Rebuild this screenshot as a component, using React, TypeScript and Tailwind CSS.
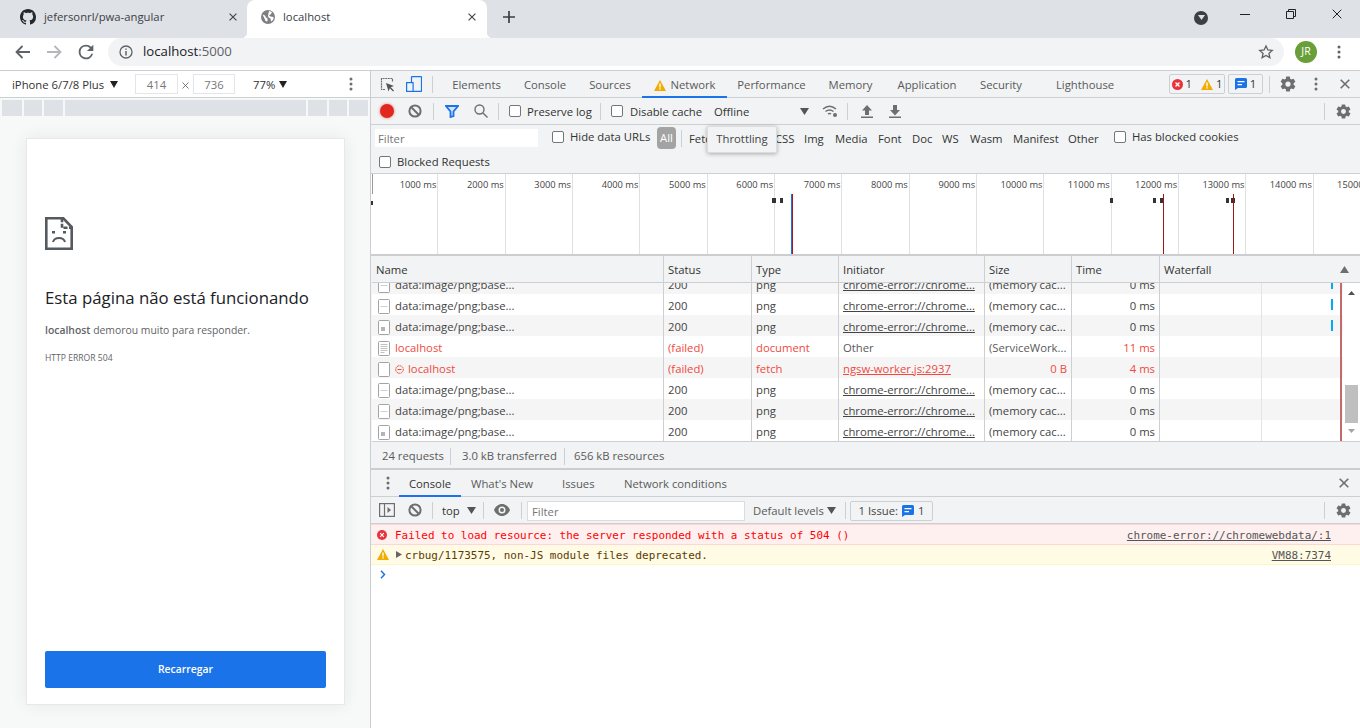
import React from "react";

const Gear = ({ className = "" }: { className?: string }) => (
  <svg viewBox="0 0 24 24" className={className} fill="#6e6e6e">
    <path d="M19.43 12.98c.04-.32.07-.64.07-.98s-.03-.66-.07-.98l2.11-1.65a.5.5 0 0 0 .12-.64l-2-3.46a.5.5 0 0 0-.61-.22l-2.49 1a7.3 7.3 0 0 0-1.69-.98l-.38-2.65A.49.49 0 0 0 14 2h-4a.49.49 0 0 0-.49.42l-.38 2.65c-.61.25-1.17.59-1.69.98l-2.49-1a.49.49 0 0 0-.61.22l-2 3.46a.49.49 0 0 0 .12.64l2.11 1.65c-.04.32-.07.65-.07.98s.03.66.07.98l-2.11 1.65a.5.5 0 0 0-.12.64l2 3.46c.12.22.39.3.61.22l2.49-1c.52.4 1.08.73 1.69.98l.38 2.65c.03.24.24.42.49.42h4c.25 0 .46-.18.49-.42l.38-2.65c.61-.25 1.17-.59 1.69-.98l2.49 1c.23.09.49 0 .61-.22l2-3.46a.5.5 0 0 0-.12-.64l-2.11-1.65zM12 15.5a3.5 3.5 0 1 1 0-7 3.5 3.5 0 0 1 0 7z" />
  </svg>
);

const Dots = ({ color = "#6e6e6e" }: { color?: string }) => (
  <svg width="4" height="14" viewBox="0 0 4 14" fill={color}>
    <circle cx="2" cy="2" r="1.5" />
    <circle cx="2" cy="7" r="1.5" />
    <circle cx="2" cy="12" r="1.5" />
  </svg>
);

const Clear = () => (
  <svg width="14" height="14" viewBox="0 0 14 14" fill="none" stroke="#6e6e6e" strokeWidth="2">
    <circle cx="7" cy="7" r="5.6" />
    <path d="M3 3l8 8" />
  </svg>
);

const Cross = ({ size = 10, color = "#6e6e6e", sw = 1.6 }: { size?: number; color?: string; sw?: number }) => (
  <svg width={size} height={size} viewBox="0 0 10 10" stroke={color} strokeWidth={sw} fill="none">
    <path d="M.7.7l8.6 8.6M9.3.7L.7 9.3" />
  </svg>
);

const Down = () => (
  <svg width="9" height="7" viewBox="0 0 9 7" fill="#555">
    <path d="M0 0h9L4.5 7z" />
  </svg>
);

const Sep = ({ className = "" }: { className?: string }) => <span className={`w-px h-[17px] bg-[#cdcfd2] shrink-0 ${className}`} />;

const Check = ({ className = "" }: { className?: string }) => (
  <span className={`w-[12px] h-[12px] rounded-[2px] border border-[#767676] bg-white shrink-0 ${className}`} />
);

const WarnIcon = () => (
  <svg width="12" height="11" viewBox="0 0 12 11">
    <path d="M6 0l6 11H0z" fill="#f2ab00" />
    <path d="M5.3 3.5h1.4v4H5.3zM5.3 8.3h1.4v1.3H5.3z" fill="#fff" />
  </svg>
);

const ErrIcon = () => (
  <svg width="11" height="11" viewBox="0 0 11 11">
    <circle cx="5.5" cy="5.5" r="5.5" fill="#e8323c" />
    <path d="M3.5 3.5l4 4M7.5 3.5l-4 4" stroke="#fff" strokeWidth="1.3" />
  </svg>
);

const MsgIcon = () => (
  <svg width="12" height="12" viewBox="0 0 12 12">
    <path d="M1.5 0h9A1.5 1.5 0 0 1 12 1.5v7A1.5 1.5 0 0 1 10.5 10H3l-3 2V1.5A1.5 1.5 0 0 1 1.5 0z" fill="#1a73e8" />
    <path d="M2.5 3h7v1.3h-7zM2.5 6h4.500v1.300h-4.500z" fill="#fff" />
  </svg>
);

const DocIcon = ({ kind }: { kind: "dash" | "img" | "lines" | "blank" }) => (
  <svg width="13" height="15" viewBox="0 0 13 15" className="shrink-0">
    <rect x=".5" y=".5" width="11" height="14" rx="1" fill="#fff" stroke="#a3a3a3" />
    {kind === "dash" && <path d="M2.5 7.500h7" stroke="#d0d0d0" />}
    {kind === "img" && <rect x="3" y="7" width="4" height="4" fill="#b5b5b5" />}
    {kind === "lines" && <path d="M2.5 3.500h7M2.500 5.500h7M2.500 7.500h7M2.500 9.500h7M2.500 11.500h4" stroke="#c0c0c0" />}
  </svg>
);

type Row = {
  icon: "dash" | "img" | "lines" | "blank";
  name: string;
  status: string;
  type: string;
  init: string;
  size: string;
  time: string;
  red?: boolean;
  link?: boolean;
  alt?: boolean;
  fail?: boolean;
  bar?: string;
  grayMeta?: boolean;
};

const png = "data:image/png;base...";
const cr = "chrome-error://chrome...";
const mem = "(memory cac...";

const rows: Row[] = [
  { icon: "dash", name: png, status: "200", type: "png", init: cr, size: mem, time: "0 ms", link: true, alt: true, bar: "h-[6px]" },
  { icon: "dash", name: png, status: "200", type: "png", init: cr, size: mem, time: "0 ms", link: true, bar: "h-[11px]" },
  { icon: "img", name: png, status: "200", type: "png", init: cr, size: mem, time: "0 ms", link: true, alt: true, bar: "h-[11px]" },
  { icon: "lines", name: "localhost", status: "(failed)", type: "document", init: "Other", size: "(ServiceWork...", time: "11 ms", red: true, grayMeta: true },
  { icon: "blank", name: "localhost", status: "(failed)", type: "fetch", init: "ngsw-worker.js:2937", size: "0 B", time: "4 ms", red: true, link: true, alt: true, fail: true },
  { icon: "dash", name: png, status: "200", type: "png", init: cr, size: mem, time: "0 ms", link: true },
  { icon: "dash", name: png, status: "200", type: "png", init: cr, size: mem, time: "0 ms", link: true, alt: true },
  { icon: "img", name: png, status: "200", type: "png", init: cr, size: mem, time: "0 ms", link: true },
];

const cols = "grid grid-cols-[292px_88px_87px_146px_87px_88px_1fr]";
const ticks = [1000, 2000, 3000, 4000, 5000, 6000, 7000, 8000, 9000, 10000, 11000, 12000, 13000, 14000, 15000];
const marks: [number, number][] = [
  [401, 4], [409, 3], [739, 3], [782, 3], [789, 4], [855, 3], [860, 4],
];

const Head = ({ children, last }: { children: React.ReactNode; last?: boolean }) => (
  <div className={`pl-[4px] pt-[2px] flex items-center justify-between ${last ? "" : "border-r border-[#cdcfd2]"}`}>{children}</div>
);

export default function App() {
  return (
    <div className="w-[1360px] h-[728px] overflow-hidden flex flex-col bg-white text-[#333] text-[11.3px] font-['Open_Sans',sans-serif]">
      {/* tab strip */}
      <div className="h-[38px] bg-[#dee1e6] flex items-center shrink-0 text-[#3c4043]">
        <div className="w-[247px] h-full flex items-center pl-[20px] pr-[10px] pb-[4px]">
          <svg width="16" height="16" viewBox="0 0 16 16" fill="#24292e">
            <path d="M8 0C3.58 0 0 3.58 0 8c0 3.54 2.29 6.53 5.47 7.59.4.07.55-.17.55-.38 0-.19-.01-.82-.01-1.49-2.01.37-2.53-.49-2.69-.94-.09-.23-.48-.94-.82-1.13-.28-.15-.68-.52-.01-.53.63-.01 1.08.58 1.23.82.72 1.21 1.87.87 2.33.66.07-.52.28-.87.51-1.07-1.78-.2-3.64-.89-3.64-3.95 0-.87.31-1.59.82-2.15-.08-.2-.36-1.02.08-2.12 0 0 .67-.21 2.2.82.64-.18 1.32-.27 2-.27.68 0 1.36.09 2 .27 1.53-1.04 2.2-.82 2.2-.82.44 1.1.16 1.92.08 2.12.51.56.82 1.27.82 2.15 0 3.07-1.87 3.75-3.65 3.95.29.25.54.73.54 1.48 0 1.07-.01 1.93-.01 2.2 0 .21.15.46.55.38A8.013 8.013 0 0 0 16 8c0-4.42-3.58-8-8-8z" />
          </svg>
          <span className="ml-[8px] flex-1 whitespace-nowrap">jefersonrl/pwa-angular</span>
          <Cross size={8} color="#45474a" sw={1.5} />
        </div>
        <div className="w-[240px] h-full bg-white rounded-t-[8px] flex items-center pl-[13px] pr-[11px] pb-[4px] relative">
          <span className="absolute left-[-6px] bottom-0 w-[6px] h-[6px] bg-[radial-gradient(circle_at_0_0,#dee1e6_6px,#fff_6.5px)]" />
          <span className="absolute right-[-6px] bottom-0 w-[6px] h-[6px] bg-[radial-gradient(circle_at_100%_0,#dee1e6_6px,#fff_6.5px)]" />
          <svg width="16" height="16" viewBox="0 0 16 16">
            <circle cx="8" cy="8" r="7" fill="#7d7f82" />
            <path d="M2.5 5.5L5 6.5l1 2 1.5 1v3l-2-.5-1-2.5zM9 2l3 1-1 2-2 1.5 1.5 1 3 .5V10l-1.5 2-1 .5-.5-3-2-1-.5-2z" fill="#fff" />
          </svg>
          <span className="ml-[7px] flex-1 whitespace-nowrap">localhost</span>
          <Cross size={8} color="#45474a" sw={1.5} />
        </div>
        <svg width="12" height="12" viewBox="0 0 12 12" className="ml-[16px] mb-[4px]" stroke="#3c4043" strokeWidth="1.7">
          <path d="M6 0v12M0 6h12" />
        </svg>
        <div className="flex-1" />
        <span className="w-[14px] h-[14px] rounded-full bg-[#3c4043] flex items-center justify-center mr-[32px] mb-[3px]">
          <svg width="7" height="5" viewBox="0 0 7 5" fill="#dee1e6"><path d="M0 0h7L3.5 5z" /></svg>
        </span>
        <span className="w-[10px] h-px bg-[#222] mr-[36px] mb-[10px]" />
        <svg width="10" height="10" viewBox="0 0 10 10" fill="none" stroke="#222" className="mr-[36px] mb-[10px]">
          <path d="M.5 2.5h7v7h-7zM2.5 2.5v-2h7v7h-2" />
        </svg>
        <span className="mr-[18px] mb-[10px] flex"><Cross size={10} color="#222" sw={1} /></span>
      </div>

      {/* address bar */}
      <div className="h-[33px] bg-white flex items-start shrink-0 border-b border-[#cbcdd1]">
        <div className="w-[108px] h-[28px] flex items-center pl-[15px]">
          <svg width="15" height="14" viewBox="0 0 15 14" stroke="#5f6368" strokeWidth="1.8" fill="none"><path d="M15 7H1.5M7.5 1l-6 6 6 6" /></svg>
          <svg width="15" height="14" viewBox="0 0 15 14" stroke="#b5b7ba" strokeWidth="1.8" fill="none" className="ml-[17px]"><path d="M0 7h13.5M7.5 1l6 6-6 6" /></svg>
          <svg width="22" height="22" viewBox="0 0 24 24" fill="#5f6368" className="ml-[13px]"><path d="M17.65 6.35A7.96 7.96 0 0 0 12 4a8 8 0 1 0 7.73 10h-2.08A6 6 0 1 1 12 6c1.66 0 3.14.69 4.22 1.78L13 11h7V4l-2.35 2.35z" /></svg>
        </div>
        <div className="w-[1176px] h-[28px] rounded-full bg-[#f1f3f4] flex items-center pl-[11px] pr-[10px]">
          <svg width="14" height="14" viewBox="0 0 14 14" fill="none" stroke="#5f6368" strokeWidth="1.3">
            <circle cx="7" cy="7" r="6" />
            <path d="M7 6v4.5M7 3.5v1.3" strokeWidth="1.5" />
          </svg>
          <span className="ml-[10px] text-[13.2px] text-[#202124]">localhost<span className="text-[#5f6368]">:5000</span></span>
          <div className="flex-1" />
          <svg width="16" height="16" viewBox="0 0 24 24" fill="none" stroke="#5f6368" strokeWidth="2"><path d="M12 3l2.800 6 6.500.7-4.900 4.400 1.400 6.400L12 17.200l-5.800 3.300 1.400-6.400L2.700 9.700 9.200 9z" /></svg>
        </div>
        <div className="flex-1 h-[28px] flex items-center">
          <span className="ml-[11px] w-[22px] h-[22px] rounded-full bg-[#689f38] text-white text-[10.5px] flex items-center justify-center">JR</span>
          <span className="ml-[20px] flex"><Dots color="#5f6368" /></span>
        </div>
      </div>

      {/* main */}
      <div className="flex-1 flex min-h-0">
        {/* device pane */}
        <div className="w-[370px] shrink-0 flex flex-col bg-[#f7f9f9] border-r border-[#cbcdd1] box-content">
          <div className="h-[26px] bg-white border-b border-[#cdcfd2] box-content flex items-center pl-[12px] text-[#333] shrink-0">
            <span className="w-[93px] whitespace-nowrap pt-[2px]">iPhone 6/7/8 Plus</span>
            <span className="ml-[5px]"><svg width="8" height="7" viewBox="0 0 8 7" fill="#222"><path d="M0 0h8L4 7z" /></svg></span>
            <span className="ml-[17px] w-[43px] h-[20px] border border-[#e4e5e6] flex items-center justify-center text-[#777] pt-[2px]">414</span>
            <span className="ml-px w-[12px] flex justify-center mt-[3px]"><Cross size={7} color="#555" sw={1.1} /></span>
            <span className="ml-[2px] w-[42px] h-[20px] border border-[#e4e5e6] flex items-center justify-center text-[#777] pt-[2px]">736</span>
            <span className="ml-[18px] w-[22px] pt-[2px]">77%</span>
            <span className="ml-[4px]"><svg width="8" height="7" viewBox="0 0 8 7" fill="#222"><path d="M0 0h8L4 7z" /></svg></span>
            <span className="ml-[62px] flex"><Dots /></span>
          </div>
          <div className="h-[16px] mt-[2px] mx-[2px] flex gap-[2px] shrink-0">
            <span className="w-[20px] bg-[#dee1e6]" />
            <span className="w-[18px] bg-[#dee1e6]" />
            <span className="w-[19px] bg-[#dee1e6]" />
            <span className="flex-1 bg-[#dee1e6]" />
            <span className="w-[19px] bg-[#dee1e6]" />
            <span className="w-[18px] bg-[#dee1e6]" />
            <span className="w-[19px] bg-[#dee1e6]" />
          </div>
          <div className="ml-[26px] mt-[22px] w-[319px] h-[567px] bg-white border-x border-y border-[#e7e8e8] shadow-[0_0_16px_rgba(0,0,0,0.07)] flex flex-col px-[18px] shrink-0">
            <svg width="28" height="33" viewBox="0 0 28 33" className="mt-[78px]" fill="none" stroke="#555a5e" strokeWidth="2.6">
              <path d="M1.3 1.3h17l8.400 8.700v21.700H1.300z" />
              <path d="M17 1.3v9.500h9.500" strokeDasharray="4 1.5" />
              <path d="M8 25c.8-2.800 3-4 6-4s5.200 1.200 6 4" strokeWidth="2" />
              <path d="M7 14h3v2.500H7zM18 14h3v2.500h-3z" fill="#555a5e" stroke="none" />
            </svg>
            <h1 className="mt-[37px] text-[16.8px] leading-[22px] font-medium text-[#202124] whitespace-nowrap">Esta página não está funcionando</h1>
            <p className="mt-[14px] text-[10.4px] leading-[14px] text-[#5f6368] whitespace-nowrap"><b className="font-semibold">localhost</b> demorou muito para responder.</p>
            <p className="mt-[15px] text-[8.6px] leading-[12px] text-[#5f6368]">HTTP ERROR 504</p>
            <div className="flex-1" />
            <button className="mb-[16px] h-[37px] w-[281px] rounded-[2px] bg-[#1a73e8] text-white text-[10.4px] font-semibold flex items-center justify-center">Recarregar</button>
          </div>
        </div>

        {/* devtools */}
        <div className="flex-1 min-w-0 flex flex-col bg-[#f1f3f4] relative">
          {/* tabs */}
          <div className="h-[26px] box-content border-b border-[#cdcfd2] flex items-center shrink-0 text-[#5a5a5a]">
            <svg width="15" height="15" viewBox="0 0 15 15" className="ml-[9px]" fill="none">
              <path d="M5 12.5H1.5v-11h11V5" stroke="#6e6e6e" strokeWidth="1.2" strokeDasharray="2 .6" />
              <path d="M6 6l8 3-3.300 1.300L14 13.500l-1 1-3.200-3.200L8.500 14.500z" fill="#555" />
            </svg>
            <svg width="16" height="16" viewBox="0 0 16 16" className="ml-[11px]" fill="none" stroke="#1a73e8" strokeWidth="1.2">
              <rect x="5.5" y=".6" width="10" height="14.8" rx=".5" />
              <rect x=".6" y="6.6" width="6.5" height="8.8" fill="#f1f3f4" />
            </svg>
            <Sep className="ml-[10px]" />
            {[
              ["Elements", "w-[71px] ml-[8px]"],
              ["Console", "w-[66px]"],
              ["Sources", "w-[64px]"],
            ].map(([t, w]) => (
              <span key={t} className={`${w} pt-[2px] text-center whitespace-nowrap`}>{t}</span>
            ))}
            <span className="w-[85px] self-stretch -mb-px border-b-2 border-[#1a73e8] flex items-center justify-center gap-[5px] whitespace-nowrap pt-[3px]"><WarnIcon />Network</span>
            {[
              ["Performance", "w-[89px]"],
              ["Memory", "w-[69px]"],
              ["Application", "w-[84px]"],
              ["Security", "w-[64px]"],
              ["Lighthouse", "w-[82px] ml-[11px]"],
            ].map(([t, w]) => (
              <span key={t} className={`${w} pt-[2px] text-center whitespace-nowrap`}>{t}</span>
            ))}
            <div className="flex-1" />
            <span className="w-[56px] h-[20px] border border-[#cdcfd2] rounded-[2px] flex items-center justify-center gap-[3px] text-[#333]"><ErrIcon />1<span className="w-[3px]" /><WarnIcon />1</span>
            <span className="ml-[3px] w-[35px] h-[20px] border border-[#cdcfd2] rounded-[2px] flex items-center justify-center gap-[3px] text-[#333]"><MsgIcon />1</span>
            <Sep className="ml-[6px]" />
            <Gear className="ml-[9px] w-[18px] h-[18px]" />
            <span className="ml-[17px] flex"><Dots /></span>
            <span className="ml-[22px] mr-[10px] flex"><Cross size={10} /></span>
          </div>

          {/* network toolbar */}
          <div className="h-[26px] box-content border-b border-[#cdcfd2] flex items-center shrink-0">
            <span className="ml-[9px] w-[14px] h-[14px] rounded-full bg-[#e0281f] shadow-[0_0_3px_rgba(224,40,31,0.6)]" />
            <span className="ml-[14px] flex"><Clear /></span>
            <Sep className="ml-[11px]" />
            <svg width="14" height="13" viewBox="0 0 14 13" className="ml-[11px]" fill="#d2e3fc" stroke="#1a73e8" strokeWidth="1.8"><path d="M1 1h12L8.500 6.500V11l-3 1V6.500z" /></svg>
            <svg width="14" height="14" viewBox="0 0 14 14" className="ml-[15px]" fill="none" stroke="#6e6e6e" strokeWidth="1.4"><circle cx="5.5" cy="5.5" r="4.5" /><path d="M9 9l4.500 4.500" /></svg>
            <Sep className="ml-[10px]" />
            <Check className="ml-[10px]" />
            <span className="ml-[6px] w-[64px] whitespace-nowrap pt-[2px]">Preserve log</span>
            <Sep className="ml-[9px]" />
            <Check className="ml-[10px]" />
            <span className="ml-[7px] w-[73px] whitespace-nowrap pt-[2px]">Disable cache</span>
            <span className="ml-[11px] w-[86px] pt-[2px]">Offline</span>
            <Down />
            <svg width="16" height="13" viewBox="0 0 16 13" className="ml-[13px]" fill="none" stroke="#6e6e6e" strokeWidth="1.5">
              <path d="M1 4c4-3.500 9-3.500 13 0M3.500 6.500c2.500-2 5.500-2 8 0M6 9c1-.8 2-.8 3 0" />
              <circle cx="13" cy="10" r="2" fill="#6e6e6e" stroke="none" />
            </svg>
            <Sep className="ml-[9px]" />
            <svg width="12" height="13" viewBox="0 0 12 13" className="ml-[13px]" fill="#6e6e6e"><path d="M6 0l5 5.500H8V10H4V5.500H1zM0 11.500h12V13H0z" /></svg>
            <svg width="12" height="13" viewBox="0 0 12 13" className="ml-[16px]" fill="#6e6e6e"><path d="M4 0h4v5h3l-5 5.500L1 5h3zM0 11.500h12V13H0z" /></svg>
            <div className="flex-1" />
            <Sep />
            <Gear className="ml-[10px] mr-[8px] w-[17px] h-[17px]" />
          </div>

          {/* filter */}
          <div className="h-[48px] box-content border-b border-[#cdcfd2] flex flex-col shrink-0">
            <div className="h-[26px] flex items-center">
              <span className="ml-[4px] w-[163px] h-[18px] bg-white flex items-center pl-[3px] pt-[2px] text-[#757575]">Filter</span>
              <Check className="ml-[14px] -mt-[2px]" />
              <span className="ml-[6px] w-[81px] whitespace-nowrap -mt-[2px]">Hide data URLs</span>
              <span className="ml-[6px] w-[19px] h-[22px] rounded-[4px] bg-[#a3a3a3] text-white flex items-center justify-center">All</span>
              <Sep className="ml-[5px]" />
              <span className="ml-[7px] flex items-center gap-[10px] whitespace-nowrap pt-[2px]">
                <span className="w-[77px]">Fetch/XHR JS</span>
                <span className="w-[19px] ml-[-1px]">CSS</span>
                <span className="w-[21px]">Img</span>
                <span className="w-[33px]">Media</span>
                <span className="w-[24px]">Font</span>
                <span className="w-[20px]">Doc</span>
                <span className="w-[18px]">WS</span>
                <span className="w-[32px]">Wasm</span>
                <span className="w-[45px] ml-px">Manifest</span>
                <span className="w-[31px]">Other</span>
              </span>
              <Check className="ml-[15px] -mt-[2px]" />
              <span className="ml-[6px] whitespace-nowrap -mt-[2px]">Has blocked cookies</span>
            </div>
            <div className="flex-1 flex items-center pl-[8px]">
              <Check />
              <span className="ml-[6px] whitespace-nowrap">Blocked Requests</span>
            </div>
          </div>

          {/* tooltip */}
          <div className="absolute left-[336px] top-[55px] w-[70px] h-[27px] bg-[#f1f3f4] rounded-[2px] border border-[#dcdcdc] shadow-[0_1px_4px_rgba(0,0,0,0.3)] flex items-center justify-center whitespace-nowrap text-[#444]">Throttling</div>

          {/* overview */}
          <div className="h-[80px] bg-white flex relative shrink-0 overflow-hidden">
            {ticks.map((t) => (
              <div key={t} className="w-[67.35px] shrink-0 h-full border-r border-[#e0e0e0] box-border text-right pr-px text-[9.3px] leading-[22px] whitespace-nowrap text-[#444]">{t} ms</div>
            ))}
            {marks.map(([x, w], i) => (
              <span key={i} className="absolute top-[24px] h-[5px] bg-[#333]" style={{ left: x, width: w }} />
            ))}
            <span className="absolute left-px top-0 h-[20px] w-px bg-[#9a9a9a]" />
            <span className="absolute left-0 top-[27px] h-[4px] w-[2px] bg-[#333]" />
            <span className="absolute left-[420px] top-[20px] bottom-0 w-[1px] bg-[#1a73e8]" />
            <span className="absolute left-[421px] top-[20px] bottom-0 w-[1px] bg-[#b3141a]" />
            <span className="absolute left-[792px] top-[20px] bottom-0 w-[1px] bg-[#a31515]" />
            <span className="absolute left-[862px] top-[20px] bottom-0 w-[1px] bg-[#a31515]" />
          </div>
          <div className="h-[2px] bg-[#cbcdd1] shrink-0" />

          {/* table */}
          <div className="flex-1 min-h-0 flex flex-col relative">
            <div className={`${cols} h-[26px] box-content border-b border-[#cdcfd2] ml-px shrink-0`}>
              <Head>Name</Head>
              <Head>Status</Head>
              <Head>Type</Head>
              <Head>Initiator</Head>
              <Head>Size</Head>
              <Head>Time</Head>
              <Head last>
                <span>Waterfall</span>
                <svg width="9" height="7" viewBox="0 0 9 7" fill="#6e6e6e" className="mr-[11px] -mt-[2px]"><path d="M0 7h9L4.500 0z" /></svg>
              </Head>
            </div>
            <div className="h-[158px] box-content border-b border-[#cdcfd2] overflow-hidden bg-white ml-px relative shrink-0">
              <div className="-mt-[10px]">
                {rows.map((r, i) => (
                  <div key={i} className={`${cols} h-[21px] ${r.alt ? "bg-[#f5f5f5]" : "bg-white"} ${r.red ? "text-[#f0493e]" : "text-[#444]"}`}>
                    <div className="border-r border-[#cdcfd2] flex items-center pl-[6px] pt-[3px] whitespace-nowrap">
                      <DocIcon kind={r.icon} />
                      {r.fail && (
                        <svg width="9" height="9" viewBox="0 0 9 9" className="ml-[4px]" fill="none" stroke="#f0493e"><circle cx="4.5" cy="4.5" r="3.8" strokeDasharray="2 .5" /><path d="M2.5 4.5h4" /></svg>
                      )}
                      <span className="ml-[4px]">{r.name}</span>
                    </div>
                    <div className="border-r border-[#cdcfd2] flex items-center pl-[4px] pt-[3px]">{r.status}</div>
                    <div className="border-r border-[#cdcfd2] flex items-center pl-[4px] pt-[3px]">{r.type}</div>
                    <div className={`border-r border-[#cdcfd2] flex items-center pl-[4px] pt-[3px] whitespace-nowrap overflow-hidden ${r.link ? "underline" : ""} ${r.grayMeta ? "text-[#5a5a5a]" : ""}`}>{r.init}</div>
                    <div className={`border-r border-[#cdcfd2] flex items-center px-[4px] pt-[3px] whitespace-nowrap overflow-hidden ${r.size === "0 B" ? "justify-end" : ""} ${r.grayMeta ? "text-[#5a5a5a]" : ""}`}>{r.size}</div>
                    <div className="border-r border-[#cdcfd2] flex items-center justify-end pr-[4px] pt-[3px]">{r.time}</div>
                    <div className="relative">
                      <span className="absolute left-[101px] top-0 bottom-0 w-px bg-[#e4e4e4]" />
                      {r.bar && <span className={`absolute left-[171px] bottom-[5px] w-[2px] bg-[#03a9f4] ${r.bar}`} />}
                    </div>
                  </div>
                ))}
              </div>
              <span className="absolute left-[968px] top-0 bottom-0 w-[2px] bg-[#c46a6a]" />
              <div className="absolute right-0 top-0 bottom-0 w-[17px] bg-white flex flex-col items-center">
                <svg width="7" height="4" viewBox="0 0 7 4" fill="#505050" className="mt-[8px]"><path d="M0 4h7L3.5 0z" /></svg>
                <div className="flex-1" />
                <span className="w-[13px] h-[38px] bg-[#bfbfbf]" />
                <svg width="7" height="4" viewBox="0 0 7 4" fill="#a3a3a3" className="mt-[6px] mb-[8px]"><path d="M0 0h7L3.5 4z" /></svg>
              </div>
            </div>
            <div className="h-[26px] flex items-center pl-[11px] pt-[2px] text-[#5a5a5a] shrink-0 whitespace-nowrap">
              <span className="w-[62px]">24 requests</span>
              <Sep className="ml-[6px]" />
              <span className="ml-[11px] w-[93px]">3.0 kB transferred</span>
              <Sep className="ml-[9px]" />
              <span className="ml-[9px]">656 kB resources</span>
            </div>
            <div className="h-[2px] bg-[#cbcdd1] shrink-0" />

            {/* drawer tabs */}
            <div className="h-[26px] box-content border-b border-[#cdcfd2] flex items-center shrink-0 text-[#5a5a5a]">
              <span className="ml-[15px] flex"><Dots /></span>
              <span className="ml-[9px] w-[62px] self-stretch -mb-px border-b-2 border-[#1a73e8] flex items-center justify-center text-[#333] pt-[3px]">Console</span>
              <span className="ml-[10px] w-[64px] whitespace-nowrap pt-[2px]">What's New</span>
              <span className="ml-[27px] w-[33px] pt-[2px]">Issues</span>
              <span className="ml-[29px] whitespace-nowrap pt-[2px]">Network conditions</span>
              <div className="flex-1" />
              <span className="mr-[11px] flex"><Cross size={10} /></span>
            </div>

            {/* console toolbar */}
            <div className="h-[26px] box-content border-b border-[#cdcfd2] flex items-center shrink-0">
              <svg width="16" height="14" viewBox="0 0 16 14" className="ml-[8px]" fill="none" stroke="#6e6e6e" strokeWidth="1.2">
                <rect x=".6" y=".6" width="14.8" height="12.8" />
                <path d="M5.5 .6v12.800" />
                <path d="M8.5 4l3.500 3-3.500 3z" fill="#6e6e6e" stroke="none" />
              </svg>
              <span className="ml-[13px] flex"><Clear /></span>
              <Sep className="ml-[10px]" />
              <span className="ml-[9px] w-[20px] pt-[2px]">top</span>
              <span className="ml-[5px] flex"><Down /></span>
              <Sep className="ml-[7px]" />
              <svg width="16" height="12" viewBox="0 0 16 12" className="ml-[10px]" fill="#6e6e6e"><path d="M8 0C4.500 0 1.500 2.500 0 6c1.500 3.500 4.500 6 8 6s6.500-2.500 8-6c-1.500-3.500-4.500-6-8-6zm0 9.500a3.500 3.500 0 1 1 0-7 3.500 3.500 0 0 1 0 7z" /><circle cx="8" cy="6" r="2" /></svg>
              <Sep className="ml-[11px]" />
              <span className="ml-[5px] mt-[2px] w-[218px] h-[20px] bg-white border border-[#dcdcdc] flex items-center pl-[4px] pt-[2px] text-[#757575]">Filter</span>
              <span className="ml-[8px] w-[71px] text-[#5a5a5a] whitespace-nowrap pt-[2px]">Default levels</span>
              <span className="ml-[3px] flex"><Down /></span>
              <Sep className="ml-[9px]" />
              <span className="ml-[4px] mt-[2px] w-[83px] h-[20px] border border-[#cdcfd2] rounded-[2px] flex items-center justify-center gap-[4px] whitespace-nowrap text-[#444]">1 Issue: <MsgIcon />1</span>
              <div className="flex-1" />
              <Sep />
              <Gear className="ml-[10px] mr-[8px] w-[17px] h-[17px]" />
            </div>

            {/* messages */}
            <div className="flex-1 bg-white flex flex-col font-['DejaVu_Sans_Mono',monospace] text-[10.95px]">
              <div className="h-[21px] bg-[#fff0f0] border-b border-[#ffd6d6] border-t flex items-center pl-[6px] pr-[29px] text-[#f00] shrink-0">
                <svg width="10" height="10" viewBox="0 0 11 11" className="shrink-0"><circle cx="5.5" cy="5.5" r="5.5" fill="#e8323c" /><path d="M3.5 3.5l4 4M7.5 3.5l-4 4" stroke="#fff" strokeWidth="1.3" /></svg>
                <span className="ml-[8px] mt-[4px] whitespace-nowrap flex-1">Failed to load resource: the server responded with a status of 504 ()</span>
                <span className="mt-[4px] text-[#555] underline whitespace-nowrap">chrome-error://chromewebdata/:1</span>
              </div>
              <div className="h-[20px] bg-[#fffbe5] border-b border-[#fff5c2] flex items-center pl-[6px] pr-[29px] text-[#5c3c00] shrink-0">
                <span className="shrink-0 flex"><WarnIcon /></span>
                <svg width="6" height="7" viewBox="0 0 6 7" fill="#666" className="ml-[7px] shrink-0"><path d="M0 0l6 3.500L0 7z" /></svg>
                <span className="ml-[3px] mt-[4px] whitespace-nowrap flex-1">crbug/1173575, non-JS module files deprecated.</span>
                <span className="mt-[4px] text-[#555] underline whitespace-nowrap">VM88:7374</span>
              </div>
              <div className="pl-[9px] pt-[5px]">
                <svg width="6" height="9" viewBox="0 0 6 9" fill="none" stroke="#1a73e8" strokeWidth="1.5"><path d="M1 .8l3.500 3.700L1 8.200" /></svg>
              </div>
            </div>
          </div>
        </div>
      </div>
    </div>
  );
}
